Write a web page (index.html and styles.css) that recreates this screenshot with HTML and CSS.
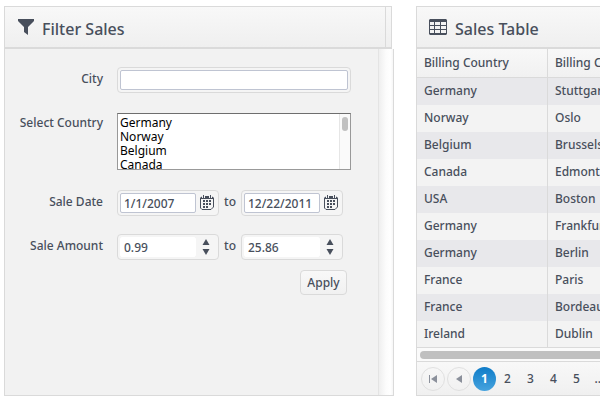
FILE: index.html
```
<!DOCTYPE html>
<html lang="en">
<head>
<meta charset="utf-8">
<title>Sales Dashboard</title>
<link rel="stylesheet" href="styles.css">
</head>
<body>
<svg class="defs" aria-hidden="true">
  <symbol id="calendar" viewBox="0 0 14 15">
    <path fill="none" stroke="currentColor" d="M2 1.500H12L13.500 3V12L11 14.500H2L.5 13V3Z"/>
    <path fill="currentColor" d="M1 2H13V4H1ZM3 0H4V2H3ZM10 0H11V2H10Z"/>
    <path fill="#f4f4f5" d="M2 1H3V3H2ZM4 1H5V3H4ZM9 1H10V3H9ZM11 1H12V3H11Z"/>
    <path fill="currentColor" d="M6 5H8V7H6ZM9 5H11V7H9ZM3 8H5V10H3ZM6 8H8V10H6ZM9 8H11V10H9ZM3 11H5V13H3ZM6 11H8V13H6ZM3 5H5V7H3Z"/>
  </symbol>
  <symbol id="up" viewBox="0 0 8 6"><path fill="currentColor" d="M4 0L7.500 6H.5Z"/></symbol>
  <symbol id="down" viewBox="0 0 8 6"><path fill="currentColor" d="M.5 0H7.500L4 6Z"/></symbol>
</svg>
<main class="dashboard">
  <section class="filter">
    <header class="panel-head filter-head">
      <svg class="icon" width="16" height="16" viewBox="0 0 16 16" aria-hidden="true"><path fill="currentColor" d="M0 0H16V2L10 8V16L6 13V8L0 2Z"/></svg>
      <h2>Filter Sales</h2>
    </header>
    <div class="filter-body">
      <form class="form">
        <label class="label" for="city">City</label>
        <div class="box box-wide"><input class="text" id="city" type="text"></div>

        <label class="label" for="country">Select Country</label>
        <div class="list">
          <select class="options" id="country" size="4" multiple>
            <option>Germany</option><option>Norway</option><option>Belgium</option><option>Canada</option><option>USA</option><option>France</option><option>Ireland</option>
          </select>
          <span class="track" aria-hidden="true"><span class="thumb"></span></span>
        </div>

        <label class="label" for="from">Sale Date</label>
        <div class="range">
          <div class="box"><input class="text" id="from" type="text" value="1/1/2007"><button class="pick" type="button" aria-label="Open calendar"><svg width="14" height="15"><use href="#calendar"/></svg></button></div>
          <label for="until">to</label>
          <div class="box"><input class="text" id="until" type="text" value="12/22/2011"><button class="pick" type="button" aria-label="Open calendar"><svg width="14" height="15"><use href="#calendar"/></svg></button></div>
        </div>

        <label class="label" for="min">Sale Amount</label>
        <div class="range">
          <div class="box"><input class="text plain" id="min" type="text" value="0.99"><span class="spin"><button type="button" aria-label="Increase"><svg width="8" height="6"><use href="#up"/></svg></button><button type="button" aria-label="Decrease"><svg width="8" height="6"><use href="#down"/></svg></button></span></div>
          <label for="max">to</label>
          <div class="box"><input class="text plain" id="max" type="text" value="25.86"><span class="spin"><button type="button" aria-label="Increase"><svg width="8" height="6"><use href="#up"/></svg></button><button type="button" aria-label="Decrease"><svg width="8" height="6"><use href="#down"/></svg></button></span></div>
        </div>
        <button class="apply" type="button">Apply</button>
      </form>
      <div class="gutter"></div>
    </div>
  </section>

  <section class="sales">
    <header class="panel-head">
      <svg class="icon" width="18" height="16" viewBox="0 0 18 16" aria-hidden="true"><path fill="currentColor" fill-rule="evenodd" d="M1 0H17L18 1V15L17 16H1L0 15V1ZM1 3V6H5V3ZM6 3V6H11V3ZM12 3V6H17V3ZM1 7V10H5V7ZM6 7V10H11V7ZM12 7V10H17V7ZM1 11V14H5V11ZM6 11V14H11V11ZM12 11V14H17V11Z"/></svg>
      <h2>Sales Table</h2>
    </header>
    <table class="table">
      <thead><tr><th>Billing Country</th><th>Billing City</th></tr></thead>
      <tbody>
        <tr><td>Germany</td><td>Stuttgart</td></tr>
        <tr><td>Norway</td><td>Oslo</td></tr>
        <tr><td>Belgium</td><td>Brussels</td></tr>
        <tr><td>Canada</td><td>Edmonton</td></tr>
        <tr><td>USA</td><td>Boston</td></tr>
        <tr><td>Germany</td><td>Frankfurt</td></tr>
        <tr><td>Germany</td><td>Berlin</td></tr>
        <tr><td>France</td><td>Paris</td></tr>
        <tr><td>France</td><td>Bordeaux</td></tr>
        <tr><td>Ireland</td><td>Dublin</td></tr>
      </tbody>
    </table>
    <div class="hscroll"><div class="hthumb"></div></div>
    <nav class="pager" aria-label="Pages">
      <button class="step" type="button" aria-label="First page"><svg width="8" height="8" viewBox="0 0 8 8"><path fill="currentColor" d="M0 0H1V8H0ZM8 0V8L2 4Z"/></svg></button>
      <button class="step" type="button" aria-label="Previous page"><svg width="8" height="8" viewBox="0 0 8 8"><path fill="currentColor" d="M7 0V8L1 4Z"/></svg></button>
      <a class="page current" href="#1">1</a>
      <a class="page" href="#2">2</a>
      <a class="page" href="#3">3</a>
      <a class="page" href="#4">4</a>
      <a class="page" href="#5">5</a>
      <a class="page" href="#more">...</a>
    </nav>
  </section>
</main>
</body>
</html>
```
FILE: styles.css
```
* { box-sizing: border-box; }
body {
  margin: 0;
  overflow: hidden;
  background: #fff;
  color: #484f5c;
  font: 500 12px/16px "Trebuchet MS", "Noto Sans", sans-serif;
}
input, select, button { font: inherit; color: inherit; }
button { padding: 0; border: 0; background: none; }
svg { display: block; }
.defs { position: absolute; width: 0; height: 0; }

.dashboard {
  display: grid;
  grid-template-columns: minmax(390px, 1fr) minmax(400px, 1fr);
  column-gap: 22px;
  padding: 6px 0 4px 4px;
}
.filter, .sales { display: flex; flex-direction: column; }

.panel-head {
  display: flex;
  align-items: center;
  gap: 8px;
  height: 43px;
  padding: 0 12px;
  border: 1px solid #dadada;
  border-bottom-width: 2px;
  background: linear-gradient(#f8f8f8, #efefef);
}
.panel-head h2 { margin: 0; padding-top: 4px; font-size: 16px; line-height: 20px; font-weight: 500; }
.filter-head { margin-right: 2px; padding-left: 13px; }
.filter-head::after {
  content: "";
  align-self: stretch;
  width: 5px;
  margin: 0 -12px 0 auto;
  border-left: 1px solid #dadada;
}

.filter-body {
  flex: 1;
  display: flex;
  border: 1px solid #dadada;
  border-top: 0;
  background: #f2f2f2;
}
.form {
  flex: 1;
  display: grid;
  grid-template-columns: 98px 234px;
  column-gap: 14px;
  align-content: start;
  row-gap: 18px;
  padding-top: 18px;
}
.label { padding-top: 4px; text-align: right; white-space: nowrap; }
.gutter {
  width: 15px;
  border-left: 1px solid #e4e4e4;
  background: linear-gradient(90deg, #efefef, #fcfcfc 50%, #fff 80%, #f6f6f6);
}

.box {
  display: flex;
  align-items: center;
  width: 102px;
  height: 26px;
  padding: 2px;
  border: 1px solid #dadada;
  border-radius: 4px;
  background: #f5f5f5;
}
.box-wide { width: 100%; }
.text {
  flex: 1;
  min-width: 0;
  height: 20px;
  padding: 0 3px;
  border: 1px solid #bfc4d2;
  border-radius: 2px;
  background: #fff;
}
.plain { border-color: #fff; }
.range { display: flex; justify-content: space-between; width: 226px; }
.range > label { padding-top: 4px; }
.pick { width: 20px; height: 20px; padding: 0 0 2px 4px; }
.spin { display: flex; flex-direction: column; align-items: center; gap: 4px; width: 20px; }

.list { position: relative; height: 57px; margin: 2px 0; }
.options {
  display: block;
  width: 100%;
  height: 57px;
  padding: 0;
  overflow: hidden;
  border: 1px solid #999;
  border-top-color: #6e6e6e;
  border-radius: 0;
  background: #fff;
  color: #000;
  outline: 0;
}
.options option { height: 14px; min-height: 14px; padding: 0 2px; line-height: 13px; }
.track {
  position: absolute;
  top: 1px;
  right: 1px;
  bottom: 1px;
  width: 11px;
  padding: 3px 2px;
  border-left: 1px solid #e6e6e6;
  background: #fafafa;
}
.thumb { display: block; width: 6px; height: 14px; border-radius: 3px; background: #c1c1c1; }

.apply {
  grid-column: 2;
  justify-self: end;
  width: 47px;
  height: 25px;
  margin: -8px 4px 0 0;
  border: 1px solid #dadada;
  border-radius: 4px;
  background: linear-gradient(#f8f8f8, #f1f1f1);
}

.sales .panel-head { border-right: 0; }
.table { width: 100%; border-collapse: separate; border-spacing: 0; table-layout: fixed; border-left: 1px solid #dadada; }
.table th, .table td { height: 27px; padding: 0 7px; text-align: left; font-weight: 500; }
.table th:first-child { width: 131px; }
.table th { height: 29px; border-bottom: 1px solid #dadada; background: linear-gradient(#f8f8f8, #f1f1f1); }
.table td { background: #f3f3f3; }
.table tr > :first-child { border-right: 1px solid #dadada; }
.table tbody tr:nth-child(odd) td { background: #e8e8eb; }
.table tbody td { padding-bottom: 1px; }
.hscroll {
  height: 15px;
  padding: 2px 3px;
  margin-top: -1px;
  border: 1px solid #dadada;
  background: #fafafa;
}
.hthumb { height: 8px; margin-top: 1px; border-radius: 4px; background: #c0c0c0; }
.pager {
  display: flex;
  align-items: center;
  height: 34px;
  padding: 0 4px;
  border: 1px solid #dadada;
  border-top: 0;
  background: linear-gradient(#f8f8f8, #f0f0f0);
}
.step {
  display: grid;
  place-items: center;
  width: 24px;
  height: 24px;
  margin-right: 2px;
  border: 1px solid #e0e0e0;
  border-radius: 50%;
  color: #8b909b;
}
.page { width: 23px; line-height: 24px; text-align: center; color: inherit; text-decoration: none; }
.current { border-radius: 50%; background: linear-gradient(#0f7cc8, #46a3de); color: #fff; font-weight: 700; }
```
